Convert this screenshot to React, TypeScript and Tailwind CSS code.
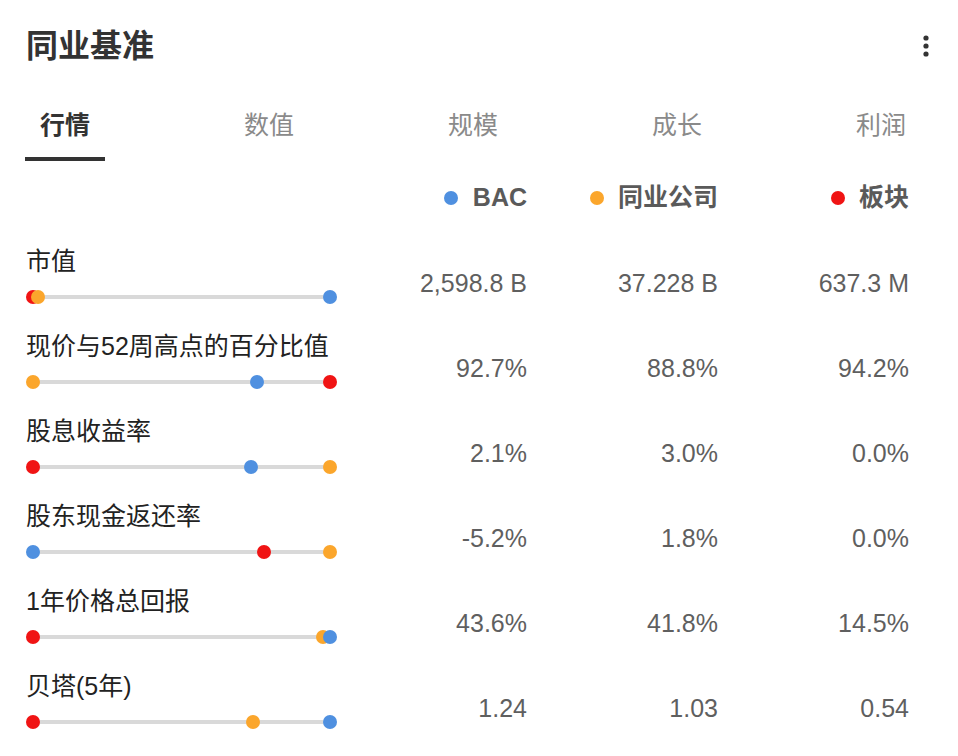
import React from 'react';

const FONT = { fontFamily: '"Liberation Sans", "Noto Sans CJK SC", sans-serif' };

const RED = '#f01414';
const ORANGE = '#fba62c';
const BLUE = '#4f90e0';

const tabs = ['行情', '数值', '规模', '成长', '利润'];

const rows = [
  { label: '市值', values: ['2,598.8 B', '37.228 B', '637.3 M'], red: 0, orange: 0.017, blue: 1 },
  { label: '现价与52周高点的百分比值', values: ['92.7%', '88.8%', '94.2%'], red: 1, orange: 0, blue: 0.754 },
  { label: '股息收益率', values: ['2.1%', '3.0%', '0.0%'], red: 0, orange: 1, blue: 0.734 },
  { label: '股东现金返还率', values: ['-5.2%', '1.8%', '0.0%'], red: 0.778, orange: 1, blue: 0 },
  { label: '1年价格总回报', values: ['43.6%', '41.8%', '14.5%'], red: 0, orange: 0.976, blue: 1 },
  { label: '贝塔(5年)', values: ['1.24', '1.03', '0.54'], red: 0, orange: 0.741, blue: 1 },
];

function Slider({ red, orange, blue }: { red: number; orange: number; blue: number }) {
  const dots = [
    { c: RED, v: red },
    { c: ORANGE, v: orange },
    { c: BLUE, v: blue },
  ];
  return (
    <div className="relative w-[311px] h-[14px]">
      <div className="absolute left-[7px] right-[7px] top-[5px] h-[4px] bg-[#d9d9d9]" />
      {dots.map((d, i) => (
        <div
          key={i}
          className="absolute top-0 w-[14px] h-[14px] rounded-full"
          style={{ left: d.v * 297, backgroundColor: d.c }}
        />
      ))}
    </div>
  );
}

export default function App() {
  return (
    <div className="w-[958px] min-h-[756px] bg-white pt-[26px] px-[26px]" style={FONT}>
      <div className="flex items-center justify-between h-[40px]">
        <h1 className="text-[32px] leading-[40px] font-bold text-[#333]">同业基准</h1>
        <svg width="8" height="24" viewBox="0 0 8 24" className="mr-[2px]">
          <circle cx="4" cy="4" r="2.6" fill="#333" />
          <circle cx="4" cy="12" r="2.6" fill="#333" />
          <circle cx="4" cy="20" r="2.6" fill="#333" />
        </svg>
      </div>

      <div className="flex justify-between w-[896px] -ml-[1px] mt-[44px]">
        {tabs.map((t, i) => (
          <div
            key={t}
            className={
              i === 0
                ? 'px-[15px] pb-[17px] text-[25px] leading-[30px] font-bold text-[#333] border-b-4 border-[#333]'
                : 'px-[15px] pb-[17px] text-[25px] leading-[30px] text-[#8a8a8a] border-b-4 border-transparent'
            }
          >
            {t}
          </div>
        ))}
      </div>

      <div className="grid grid-cols-[311px_190px_191px_191px] mt-[17px] h-[40px] items-center text-[25px] font-bold text-[#5a5a5a]">
        <div />
        <div className="flex items-center justify-end gap-[15px]">
          <span className="w-[14px] h-[14px] rounded-full bg-[#4f90e0]" />
          <span>BAC</span>
        </div>
        <div className="flex items-center justify-end gap-[14px]">
          <span className="w-[14px] h-[14px] rounded-full bg-[#fba62c]" />
          <span>同业公司</span>
        </div>
        <div className="flex items-center justify-end gap-[14px]">
          <span className="w-[14px] h-[14px] rounded-full bg-[#f01414]" />
          <span>板块</span>
        </div>
      </div>

      <div className="mt-[28px]">
        {rows.map((r) => (
          <div key={r.label} className="grid grid-cols-[311px_190px_191px_191px] h-[85px]">
            <div>
              <div className="text-[25px] leading-[30px] text-[#222]">{r.label}</div>
              <div className="mt-[14px]">
                <Slider red={r.red} orange={r.orange} blue={r.blue} />
              </div>
            </div>
            {r.values.map((v, i) => (
              <div key={i} className="pt-[22px] text-right text-[25px] leading-[30px] text-[#5f5f5f]">
                {v}
              </div>
            ))}
          </div>
        ))}
      </div>
    </div>
  );
}
